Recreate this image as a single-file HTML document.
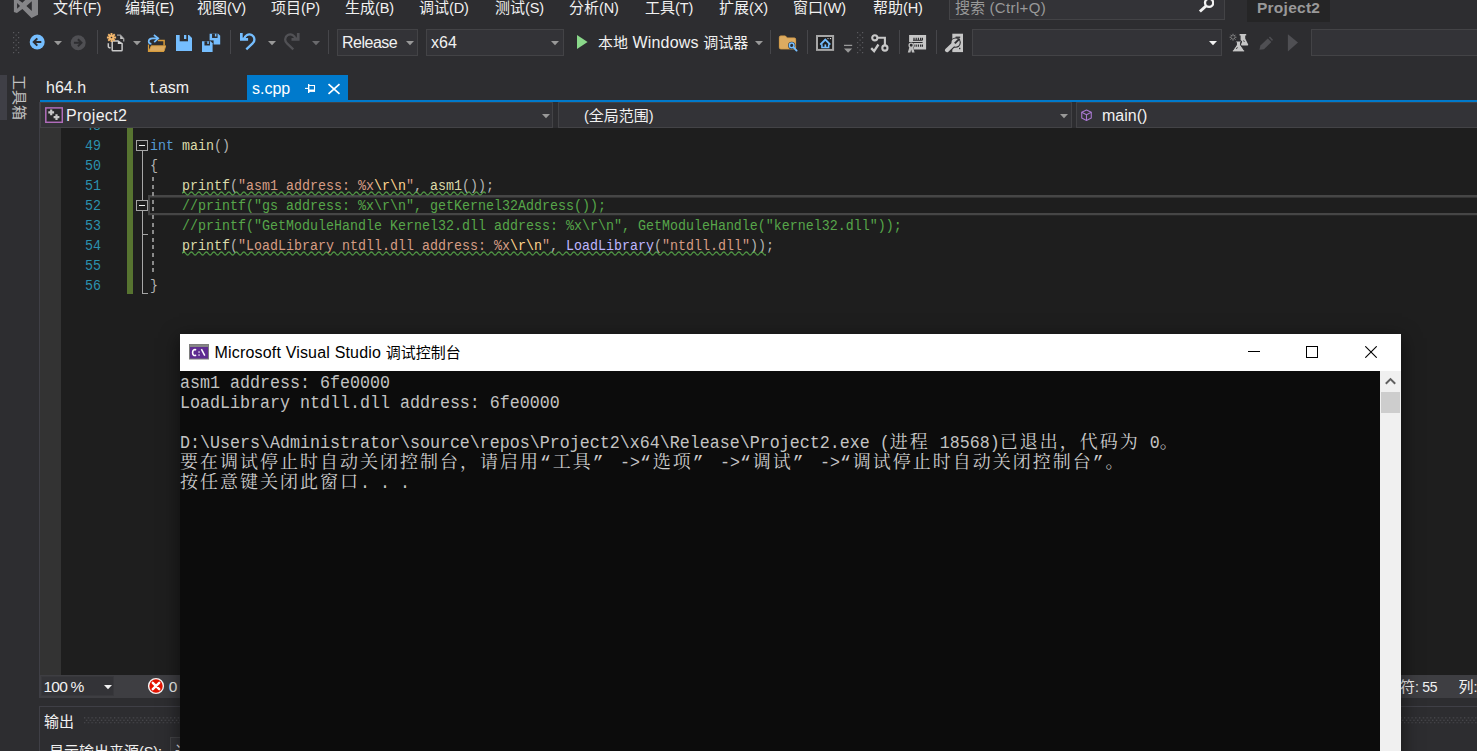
<!DOCTYPE html>
<html lang="zh-CN"><head><meta charset="utf-8"><title>Project2 - Microsoft Visual Studio</title>
<style>
html,body{margin:0;padding:0}
body{width:1477px;height:751px;overflow:hidden;position:relative;background:#2d2d30;font-family:"Liberation Sans","Noto Sans CJK SC",sans-serif;}
#root{position:absolute;left:0;top:0;width:1477px;height:751px;overflow:hidden;background:#2d2d30}
#root div{position:absolute;box-sizing:border-box}
.t{white-space:pre;line-height:20px;height:20px}
.ui{font-family:"Liberation Sans","Noto Sans CJK SC",sans-serif;font-size:15px}
.mn{font-size:14.5px;letter-spacing:-0.15px}
.mn3{font-size:15px;letter-spacing:0.35px}
.mn2{font-size:16px;letter-spacing:0.15px}
.code{font-family:"Liberation Mono",monospace;font-size:13.3333px;transform:scaleY(1.13);transform-origin:0 14.4px}
.con{font-family:"Liberation Mono",monospace;font-size:16.6667px}
.l{display:inline-block;transform:scaleY(1.15);transform-origin:0 15.5px;color:#c3c3c3}
.cj{display:inline-block;position:relative;vertical-align:top;overflow:hidden;line-height:1.2;top:1px;font-family:"Liberation Sans","Noto Sans CJK SC",sans-serif}
.cjr{font-family:"Liberation Mono","Noto Serif CJK SC",serif;letter-spacing:2px;color:#cccccc}
.ct{white-space:pre}
.ic{display:block}
</style></head>
<body>
<div id="root">
<div class="t ui" style="left:53px;top:-2.5px;color:#f1f1f1"><span class="cj" style="width:30px;height:18.75px;font-size:15px;"><span class="ct">文件</span></span><span class="mn">(F)</span></div>
<div class="t ui" style="left:125px;top:-2.5px;color:#f1f1f1"><span class="cj" style="width:30px;height:18.75px;font-size:15px;"><span class="ct">编辑</span></span><span class="mn">(E)</span></div>
<div class="t ui" style="left:197px;top:-2.5px;color:#f1f1f1"><span class="cj" style="width:30px;height:18.75px;font-size:15px;"><span class="ct">视图</span></span><span class="mn">(V)</span></div>
<div class="t ui" style="left:271px;top:-2.5px;color:#f1f1f1"><span class="cj" style="width:30px;height:18.75px;font-size:15px;"><span class="ct">项目</span></span><span class="mn">(P)</span></div>
<div class="t ui" style="left:345px;top:-2.5px;color:#f1f1f1"><span class="cj" style="width:30px;height:18.75px;font-size:15px;"><span class="ct">生成</span></span><span class="mn">(B)</span></div>
<div class="t ui" style="left:419px;top:-2.5px;color:#f1f1f1"><span class="cj" style="width:30px;height:18.75px;font-size:15px;"><span class="ct">调试</span></span><span class="mn">(D)</span></div>
<div class="t ui" style="left:495px;top:-2.5px;color:#f1f1f1"><span class="cj" style="width:30px;height:18.75px;font-size:15px;"><span class="ct">测试</span></span><span class="mn">(S)</span></div>
<div class="t ui" style="left:569px;top:-2.5px;color:#f1f1f1"><span class="cj" style="width:30px;height:18.75px;font-size:15px;"><span class="ct">分析</span></span><span class="mn">(N)</span></div>
<div class="t ui" style="left:645px;top:-2.5px;color:#f1f1f1"><span class="cj" style="width:30px;height:18.75px;font-size:15px;"><span class="ct">工具</span></span><span class="mn">(T)</span></div>
<div class="t ui" style="left:719px;top:-2.5px;color:#f1f1f1"><span class="cj" style="width:30px;height:18.75px;font-size:15px;"><span class="ct">扩展</span></span><span class="mn">(X)</span></div>
<div class="t ui" style="left:793px;top:-2.5px;color:#f1f1f1"><span class="cj" style="width:30px;height:18.75px;font-size:15px;"><span class="ct">窗口</span></span><span class="mn">(W)</span></div>
<div class="t ui" style="left:873px;top:-2.5px;color:#f1f1f1"><span class="cj" style="width:30px;height:18.75px;font-size:15px;"><span class="ct">帮助</span></span><span class="mn">(H)</span></div>
<div style="left:949px;top:-1px;width:276px;height:21px;background:#333337;border:1px solid #434346;"></div>
<div class="t ui" style="left:955px;top:-2.5px;color:#999"><span class="cj" style="width:30px;height:18.75px;font-size:15px;"><span class="ct">搜索</span></span><span class="mn3"> (Ctrl+Q)</span></div>
<div style="left:1198px;top:-2px;width:16px;height:16px"><svg class="ic" width="16" height="16" viewBox="0 0 16 16"><circle cx="11.1" cy="4.8" r="4.1" fill="none" stroke="#f1f1f1" stroke-width="2.3"/><path d="M8 8L1.9 13.5" stroke="#f1f1f1" stroke-width="3" stroke-linecap="butt"/></svg></div>
<div style="left:1247px;top:0px;width:83px;height:22px;background:#252526;"></div>
<div class="t ui" style="left:1257px;top:-2px;color:#999;font-weight:bold;font-size:15.5px;letter-spacing:0.25px">Project2</div>
<div style="left:13px;top:-8px;width:26px;height:26px"><svg class="ic" width="26" height="26" viewBox="13 -8 26 26"><path fill-rule="evenodd" fill="#858588" d="M31.5 18L38 14.7V-2.9L31.5-6.2L22.4 2.7L16.9-1.2L13.9-.2V12L16.9 13L22.4 9.1ZM17.1 3V8.8L20 5.9ZM31.8 1.3V10.9L26.4 5.9Z"/></svg></div>
<div style="left:13px;top:32px;width:7px;height:22px"><svg class="ic" width="7" height="22" viewBox="0 0 7 22"><g fill="#5a5a5e"><rect x="0" y="0" width="1.2" height="1.2"/><rect x="5" y="0" width="1.2" height="1.2"/><rect x="2.5" y="2.5" width="1.2" height="1.2"/><rect x="0" y="5" width="1.2" height="1.2"/><rect x="5" y="5" width="1.2" height="1.2"/><rect x="2.5" y="7.5" width="1.2" height="1.2"/><rect x="0" y="10" width="1.2" height="1.2"/><rect x="5" y="10" width="1.2" height="1.2"/><rect x="2.5" y="12.5" width="1.2" height="1.2"/><rect x="0" y="15" width="1.2" height="1.2"/><rect x="5" y="15" width="1.2" height="1.2"/><rect x="2.5" y="17.5" width="1.2" height="1.2"/><rect x="0" y="20" width="1.2" height="1.2"/><rect x="5" y="20" width="1.2" height="1.2"/></g></svg></div>
<div style="left:29px;top:34px;width:16px;height:16px"><svg class="ic" width="16" height="16" viewBox="0 0 16 16"><circle cx="8.2" cy="8" r="7.5" fill="#75beff"/><path d="M12.3 8H5.2M8.3 4.4L4.7 8L8.3 11.6" fill="none" stroke="#2d2d30" stroke-width="2"/></svg></div>
<div style="left:54px;top:41px;width:8px;height:5px"><svg class="ic" width="8" height="5" viewBox="0 0 8 5"><path d="M0 0H8L4 4.2Z" fill="#999999"/></svg></div>
<div style="left:70px;top:35px;width:16px;height:16px"><svg class="ic" width="16" height="16" viewBox="0 0 16 16"><circle cx="8.2" cy="7.8" r="7.5" fill="#4f4f53"/><path d="M3.9 7.8H11M7.9 4.2L11.5 7.8L7.9 11.4" fill="none" stroke="#2d2d30" stroke-width="2"/></svg></div>
<div style="left:97px;top:30px;width:1px;height:24px;background:#46464a"></div>
<div style="left:106px;top:33px;width:19px;height:19px"><svg class="ic" width="19" height="19" viewBox="0 0 19 19"><path d="M11 2.1H14.4L17.7 5.7V8.4" fill="none" stroke="#9c9c9c" stroke-width="1.4"/><path d="M14.2 2.2V5.9H17.6Z" fill="#c4c4c4"/><path d="M2.3 10.2V13.2Q2.3 14.8 4.6 14.8" fill="none" stroke="#c8c8c8" stroke-width="1.5"/><path d="M7 7.9H12L16.1 10.7V16.9Q16.1 17.7 15.3 17.7H7Q6.2 17.7 6.2 16.9V8.7Q6.2 7.9 7 7.9Z" fill="#28282b" stroke="#c8c8c8" stroke-width="1.5"/><path d="M11.8 7.6V10.9H16.3Z" fill="#d4d4d4"/><g stroke="#f3b76c" stroke-width="1.9" stroke-linecap="butt"><path d="M5.5 -0.1V9.1M0.9 4.5H10.1M2.25 1.25L8.75 7.75M8.75 1.25L2.25 7.75"/></g><circle cx="5.5" cy="4.5" r="0.8" fill="#2d2d30"/></svg></div>
<div style="left:133px;top:41px;width:8px;height:5px"><svg class="ic" width="8" height="5" viewBox="0 0 8 5"><path d="M0 0H8L4 4.2Z" fill="#999999"/></svg></div>
<div style="left:147px;top:34px;width:19px;height:19px"><svg class="ic" width="19" height="19" viewBox="0 0 19 19"><path d="M10.9 6.6H17.1V11.6" fill="none" stroke="#d69a3a" stroke-width="1.5"/><path d="M1.5 10.4V17.4H17" fill="none" stroke="#d69a3a" stroke-width="1.2"/><path d="M4.3 11.8H18.7L17.1 17.2H1.8Z" fill="#dcab61" stroke="#d69a3a" stroke-width="0.9" stroke-linejoin="round"/><path d="M11 4.4H5.6Q1.7 4.5 1.7 7.6Q1.9 9.7 4.4 9.9" fill="none" stroke="#75beff" stroke-width="1.7"/><path d="M6.9 1L11.2 4.3L7.2 8.2" fill="none" stroke="#75beff" stroke-width="1.7"/></svg></div>
<div style="left:176px;top:35px;width:16px;height:16px"><svg class="ic" width="16" height="16" viewBox="0 0 16 16"><path d="M0 0h13l3 3v13h-16z" fill="#75beff"/><rect x="3.7" y="0" width="8.3" height="6.3" fill="#2d2d30"/><rect x="8" y="0" width="2.3" height="4" fill="#75beff"/></svg></div>
<div style="left:202px;top:33px;width:19px;height:19px"><svg class="ic" width="19" height="19" viewBox="0 0 19 19"><path d="M7.6 0.8h8.6125l1.9875 1.9875v8.6125h-10.6z" fill="#75beff"/><rect x="10.0512" y="0.8" width="5.49875" height="4.17375" fill="#2d2d30"/><rect x="12.9" y="0.8" width="1.52375" height="2.65" fill="#75beff"/><path d="M-0.9 7.4H11.6V19H-0.9Z" fill="#2d2d30"/><path d="M0 8.3h8.6125l1.9875 1.9875v8.6125h-10.6z" fill="#75beff"/><rect x="2.45125" y="8.3" width="5.49875" height="4.17375" fill="#2d2d30"/><rect x="5.3" y="8.3" width="1.52375" height="2.65" fill="#75beff"/></svg></div>
<div style="left:230px;top:30px;width:1px;height:24px;background:#46464a"></div>
<div style="left:239px;top:32px;width:18px;height:19px"><svg class="ic" width="18" height="19" viewBox="0 0 18 19"><path d="M1 1H3.7V6.1H9.1V8.8H1Z" fill="#75beff"/><path d="M3.4 6.5L5.3 6.8" stroke="#75beff" stroke-width="2.3"/><path d="M5.25 6.8A5.1 5.1 0 1 1 13.6 11.4L7.3 17.4" fill="none" stroke="#75beff" stroke-width="2.3"/></svg></div>
<div style="left:268px;top:41px;width:8px;height:5px"><svg class="ic" width="8" height="5" viewBox="0 0 8 5"><path d="M0 0H8L4 4.2Z" fill="#999999"/></svg></div>
<div style="left:284px;top:32px;width:18px;height:19px"><svg class="ic" width="18" height="19" viewBox="0 0 18 19"><g transform="translate(16.6 0) scale(-1 1)"><path d="M1 1H3.7V6.1H9.1V8.8H1Z" fill="#515155"/><path d="M3.4 6.5L5.3 6.8" stroke="#515155" stroke-width="2.3"/><path d="M5.25 6.8A5.1 5.1 0 1 1 13.6 11.4L7.3 17.4" fill="none" stroke="#515155" stroke-width="2.3"/></g></svg></div>
<div style="left:312px;top:41px;width:8px;height:5px"><svg class="ic" width="8" height="5" viewBox="0 0 8 5"><path d="M0 0H8L4 4.2Z" fill="#6a6a6d"/></svg></div>
<div style="left:328px;top:30px;width:1px;height:24px;background:#46464a"></div>
<div style="left:337px;top:29px;width:81px;height:27px;background:#333337;border:1px solid #434346;"></div>
<div class="t ui" style="left:342px;top:32.5px;color:#f1f1f1;font-size:16px;letter-spacing:-0.5px">Release</div>
<div style="left:406px;top:41px;width:8px;height:5px"><svg class="ic" width="8" height="5" viewBox="0 0 8 5"><path d="M0 0H8L4 4.2Z" fill="#999999"/></svg></div>
<div style="left:426px;top:29px;width:138px;height:27px;background:#333337;border:1px solid #434346;"></div>
<div class="t ui" style="left:431px;top:32.5px;color:#f1f1f1;font-size:16px">x64</div>
<div style="left:551px;top:41px;width:8px;height:5px"><svg class="ic" width="8" height="5" viewBox="0 0 8 5"><path d="M0 0H8L4 4.2Z" fill="#999999"/></svg></div>
<div style="left:576px;top:34px;width:12px;height:16px"><svg class="ic" width="12" height="16" viewBox="0 0 12 16"><path d="M1 1L11.6 8L1 15Z" fill="#8ad88a"/></svg></div>
<div class="t ui" style="left:598px;top:32.5px;color:#f1f1f1"><span class="cj" style="width:30px;height:18.75px;font-size:15px;"><span class="ct">本地</span></span><span class="mn2"> Windows </span><span class="cj" style="width:45px;height:18.75px;font-size:15px;"><span class="ct">调试器</span></span></div>
<div style="left:755px;top:41px;width:8px;height:5px"><svg class="ic" width="8" height="5" viewBox="0 0 8 5"><path d="M0 0H8L4 4.2Z" fill="#999999"/></svg></div>
<div style="left:770px;top:30px;width:1px;height:24px;background:#46464a"></div>
<div style="left:778px;top:34px;width:20px;height:19px"><svg class="ic" width="20" height="19" viewBox="0 0 20 19"><path d="M1.4 3.4Q1.4 2 2.8 2H7.4L9.2 4H16.4Q17.6 4 17.6 5.3V13.6Q17.6 14.9 16.3 14.9H2.8Q1.4 14.9 1.4 13.6Z" fill="#dcab61" stroke="#d9a04c" stroke-width="1"/><circle cx="13.7" cy="11.4" r="3.6" fill="#2d2d30"/><circle cx="13.7" cy="11.4" r="2.3" fill="#2d2d30" stroke="#75beff" stroke-width="1.5"/><path d="M15.4 13.2L18.6 16.6" stroke="#75beff" stroke-width="1.9" stroke-linecap="round"/></svg></div>
<div style="left:807px;top:30px;width:1px;height:24px;background:#46464a"></div>
<div style="left:816px;top:34px;width:19px;height:18px"><svg class="ic" width="19" height="18" viewBox="0 0 19 18"><rect x="1" y="2" width="16.1" height="13.9" fill="#1f1f20" stroke="#a6a6a6" stroke-width="2"/><path d="M4.3 10.7L9.3 5.6L14.3 10.7" fill="none" stroke="#75beff" stroke-width="1.9"/><path d="M5.9 10.2V13.5H12.7V10.2" fill="none" stroke="#75beff" stroke-width="1.5"/><rect x="8.5" y="10.4" width="1.7" height="3.2" fill="#75beff"/><rect x="11.4" y="4" width="1.2" height="1.1" fill="#bbb"/><rect x="13.9" y="4" width="1.2" height="1.1" fill="#ddd"/></svg></div>
<div style="left:843px;top:44px;width:10px;height:10px"><svg class="ic" width="10" height="10" viewBox="0 0 10 10"><path d="M1 1.4H9.2" stroke="#999" stroke-width="1.3"/><path d="M1 4.4H9.2L5.1 8.8Z" fill="#999"/></svg></div>
<div style="left:857px;top:32px;width:7px;height:22px"><svg class="ic" width="7" height="22" viewBox="0 0 7 22"><g fill="#5a5a5e"><rect x="0" y="0" width="1.2" height="1.2"/><rect x="5" y="0" width="1.2" height="1.2"/><rect x="2.5" y="2.5" width="1.2" height="1.2"/><rect x="0" y="5" width="1.2" height="1.2"/><rect x="5" y="5" width="1.2" height="1.2"/><rect x="2.5" y="7.5" width="1.2" height="1.2"/><rect x="0" y="10" width="1.2" height="1.2"/><rect x="5" y="10" width="1.2" height="1.2"/><rect x="2.5" y="12.5" width="1.2" height="1.2"/><rect x="0" y="15" width="1.2" height="1.2"/><rect x="5" y="15" width="1.2" height="1.2"/><rect x="2.5" y="17.5" width="1.2" height="1.2"/><rect x="0" y="20" width="1.2" height="1.2"/><rect x="5" y="20" width="1.2" height="1.2"/></g></svg></div>
<div style="left:870px;top:33px;width:20px;height:20px"><svg class="ic" width="20" height="20" viewBox="0 0 20 20"><g fill="none" stroke="#c8c8c8" stroke-width="2.1"><circle cx="4.8" cy="4.8" r="2.6"/><circle cx="14.9" cy="15" r="2.6"/><path d="M7.4 4.8H14.9V12.4"/><path d="M1.2 15.1L4.1 18.1L8.4 11.5" stroke-width="2.3"/></g></svg></div>
<div style="left:899px;top:30px;width:1px;height:24px;background:#46464a"></div>
<div style="left:907px;top:34px;width:20px;height:19px"><svg class="ic" width="20" height="19" viewBox="0 0 20 19"><rect x="2.1" y="1" width="17" height="14.5" fill="#c6c6c6"/><path d="M6 6.3H15.6M2.1 8.5H15.6" stroke="#2d2d30" stroke-width="1"/><path d="M7 3.8V6M9.2 3.8V6M11.4 3.8V6M13.6 3.8V6M15.4 3.8V6M7 10.6V12.8M9.2 10.6V12.8M11.4 10.6V12.8M13.6 10.6V12.8M15.4 10.6V12.8" stroke="#2d2d30" stroke-width="1.2"/><path d="M1 8.6H6.6V16H1Z" fill="#2d2d30"/><path d="M2.6 12.6L0.8 18.4H3.4L4.2 15.6L5 18.4H7.6L5.8 12.6Z" fill="#bdbdbd"/><circle cx="4.2" cy="11.3" r="2.1" fill="#2d2d30" stroke="#c0c0c0" stroke-width="1.3"/></svg></div>
<div style="left:936px;top:30px;width:1px;height:24px;background:#46464a"></div>
<div style="left:944px;top:33px;width:20px;height:20px"><svg class="ic" width="20" height="20" viewBox="0 0 20 20"><path d="M8.3 0.7H19V19.1H8.3Z" fill="#c6c6c6"/><path d="M11.6 3.6H16.2V4.9H11.6Z" fill="#2d2d30"/><rect x="15" y="14.8" width="1.4" height="1.4" fill="#2d2d30"/><path d="M3 17.2L10.4 10.2" stroke="#2d2d30" stroke-width="6.4" stroke-linecap="round"/><circle cx="11.6" cy="9.6" r="5.2" fill="#2d2d30"/><path d="M3 17.2L10.4 10.2" stroke="#c6c6c6" stroke-width="4" stroke-linecap="round"/><circle cx="11.6" cy="9.6" r="4.1" fill="#c6c6c6"/><path d="M10.8 10.4L15.6 5.6" stroke="#2d2d30" stroke-width="2"/></svg></div>
<div style="left:972px;top:29px;width:250px;height:27px;background:#333337;border:1px solid #434346;"></div>
<div style="left:1208.8px;top:41px;width:8px;height:5px"><svg class="ic" width="8" height="5" viewBox="0 0 8 5"><path d="M0 0H8L4 4.2Z" fill="#f1f1f1"/></svg></div>
<div style="left:1229px;top:33px;width:20px;height:20px"><svg class="ic" width="20" height="20" viewBox="0 0 20 20"><g fill="#c6c6c6"><path d="M10.6 1H17.2V2.4H16.2V5.6L19.2 11.6Q19.4 12.6 18.4 12.6H11.6L13 8.6L11.6 7.6V2.4H10.6Z"/><path d="M6.6 8H12.4V9.4H11.6V12L15.4 17.6Q15.8 18.9 14.6 18.9H4.4Q3.2 18.9 3.6 17.6L7.4 12V9.4H6.6Z" stroke="#2d2d30" stroke-width="1"/></g><path d="M8.4 14.2L7.4 16" stroke="#2d2d30" stroke-width="0.9"/><path d="M14.6 7.4L15.4 9" stroke="#2d2d30" stroke-width="0.8"/><g stroke="#9a9a9a" stroke-width="0.9" fill="none"><path d="M4 0.8V7.6M0.6 4.2H7.4M1.6 1.8L6.4 6.6M6.4 1.8L1.6 6.6"/></g><circle cx="4" cy="4.2" r="1.3" fill="#2d2d30"/></svg></div>
<div style="left:1258px;top:36px;width:16px;height:14px"><svg class="ic" width="16" height="14" viewBox="0 0 16 14"><path d="M2.4 9.6L9.8 2.4L13.4 6L6 13.2L1.4 13.8Z" fill="#4f4f53"/><path d="M10.8 1.6L12 0.6L15 3.8L14 4.9Z" fill="#4f4f53"/></svg></div>
<div style="left:1287px;top:33.5px;width:12px;height:18px"><svg class="ic" width="12" height="18" viewBox="0 0 12 18"><path d="M0.9 0.2L11 8.6L0.9 17.4Z" fill="#4f4f53"/></svg></div>
<div style="left:1311px;top:29px;width:180px;height:27px;background:#333337;border:1px solid #434346;"></div>
<div style="left:0px;top:75px;width:7px;height:45px;background:#3f3f46;"></div>
<div class="t ui" style="left:29px;top:75px;transform-origin:0 0;transform:rotate(90deg);color:#d0d0d0"><span class="cj" style="width:45px;height:18.75px;font-size:15px;color:#c0c0c0;"><span class="ct">工具箱</span></span></div>
<div class="t ui" style="left:46px;top:78px;color:#f1f1f1;font-size:16px">h64.h</div>
<div class="t ui" style="left:150px;top:78px;color:#f1f1f1;font-size:16px">t.asm</div>
<div style="left:247px;top:75px;width:101px;height:26px;background:#007acc;"></div>
<div class="t ui" style="left:252px;top:78.5px;color:#fff;font-size:16px">s.cpp</div>
<div style="left:304px;top:82px;width:12px;height:12px"><svg class="ic" width="12" height="12" viewBox="0 0 12 12"><g fill="none" stroke="#fff"><path d="M1 6.4H4.6" stroke-width="1.1"/><path d="M4.7 2V11" stroke-width="1.4"/><path d="M4.6 3.5H10.5V9.6" stroke-width="1.1"/><path d="M4.6 8.7H11" stroke-width="2.4"/></g></svg></div>
<div style="left:327px;top:82px;width:14px;height:13px"><svg class="ic" width="14" height="13" viewBox="0 0 14 13"><path d="M1.5 2.2L12.5 11.8M12.5 2.2L1.5 11.8" stroke="#fff" stroke-width="1.7"/></svg></div>
<div style="left:40px;top:100px;width:1437px;height:2px;background:#007acc;"></div>
<div style="left:40px;top:102px;width:1437px;height:26px;background:#2d2d30;"></div>
<div style="left:40px;top:102px;width:513px;height:26px;background:#333337;border:1px solid #434346;"></div>
<div style="left:558px;top:102px;width:514px;height:26px;background:#333337;border:1px solid #434346;"></div>
<div style="left:1076px;top:102px;width:410px;height:26px;background:#333337;border:1px solid #434346;"></div>
<div style="left:45px;top:107px;width:18px;height:16px"><svg class="ic" width="18" height="16" viewBox="0 0 18 16"><rect x="0.8" y="0.9" width="16.5" height="14.4" fill="#2a2a2c" stroke="#b06cbb" stroke-width="1.5"/><path d="M6.2 2.4V8.2M3.3 5.3H9.1M11.5 7.3V13.1M8.6 10.2H14.4" stroke="#c8c8c8" stroke-width="2.2"/></svg></div>
<div class="t ui" style="left:66px;top:106px;color:#f1f1f1;font-size:16px;letter-spacing:0.3px">Project2</div>
<div style="left:542px;top:114px;width:8px;height:5px"><svg class="ic" width="8" height="5" viewBox="0 0 8 5"><path d="M0 0H8L4 4.2Z" fill="#999999"/></svg></div>
<div class="t ui" style="left:584px;top:106px;color:#f1f1f1"><span class="mn">(</span><span class="cj" style="width:60px;height:18.75px;font-size:15px;"><span class="ct">全局范围</span></span><span class="mn">)</span></div>
<div style="left:1060px;top:114px;width:8px;height:5px"><svg class="ic" width="8" height="5" viewBox="0 0 8 5"><path d="M0 0H8L4 4.2Z" fill="#999999"/></svg></div>
<div style="left:1080.6px;top:108.6px;width:11px;height:12.4px"><svg class="ic" width="11" height="12.4" viewBox="0 0 12 13"><g fill="none" stroke="#a877cf" stroke-width="1.2" stroke-linejoin="round"><path d="M6 0.8L11.2 3.4V9.6L6 12.2L0.8 9.6V3.4Z"/><path d="M0.8 3.4L6 6L11.2 3.4M6 6V12.2"/></g></svg></div>
<div class="t ui" style="left:1102px;top:106px;color:#f1f1f1;font-size:16px">main()</div>
<div style="left:40px;top:128px;width:1437px;height:547px;background:#1e1e1e;"></div>
<div style="left:40px;top:128px;width:21px;height:547px;background:#333333;"></div>
<div style="left:39px;top:102px;width:1px;height:596px;background:#3f3f46;"></div>
<div style="left:127px;top:128px;width:6px;height:166px;background:#577430;"></div>
<div style="left:148px;top:195px;width:1340px;height:20px;border:2px solid #464646;"></div>
<div style="left:150px;top:197px;width:1340px;height:1px;background:#343434;"></div>
<div style="left:148px;top:215px;width:1340px;height:1px;background:#272727;"></div>
<div style="left:141.8px;top:151px;width:1.4px;height:143px;background:#a8a8a8;"></div>
<div style="left:142px;top:293px;width:6px;height:1px;background:#a5a5a5;"></div>
<div style="left:142px;top:234px;width:6px;height:1px;background:#a5a5a5;"></div>
<div style="left:136px;top:140px;width:12px;height:11px;border:1px solid #a5a5a5;background:#1e1e1e;"><div style="left:2px;top:3.8px;width:6px;height:1.5px;background:#f0f0f0;"></div></div>
<div style="left:136px;top:200px;width:12px;height:11px;border:1px solid #a5a5a5;background:#1e1e1e;"><div style="left:2px;top:3.8px;width:6px;height:1.5px;background:#f0f0f0;"></div></div>
<div style="left:152.4px;top:177px;width:1.8px;height:98px;background:repeating-linear-gradient(180deg,#8a8a8a 0 4px,transparent 4px 7.6px);"></div>
<div style="left:80px;top:128px;width:30px;height:6px;overflow:hidden;"><div class="t code" style="left:5px;top:-11.5px;color:#2b91af">48</div></div>
<div class="t code" style="left:85px;top:136.5px;color:#2b91af">49</div>
<div class="t code" style="left:150px;top:136.5px;color:#dcdcdc"><span style="color:#569cd6">int</span> <span style="color:#dcdcaa">main</span><span style="color:#b4b4b4">()</span></div>
<div class="t code" style="left:85px;top:156.5px;color:#2b91af">50</div>
<div class="t code" style="left:150px;top:156.5px;color:#dcdcdc"><span style="color:#b4b4b4">{</span></div>
<div class="t code" style="left:85px;top:176.5px;color:#2b91af">51</div>
<div class="t code" style="left:150px;top:176.5px;color:#dcdcdc">    <span style="color:#dcdcaa">printf</span><span style="color:#b4b4b4">(</span><span style="color:#d69d85">&quot;asm1 address: %x</span><span style="color:#ffd68f">\r\n</span><span style="color:#d69d85">&quot;</span><span style="color:#b4b4b4">, </span><span style="color:#dcdcaa">asm1</span><span style="color:#b4b4b4">());</span></div>
<div class="t code" style="left:85px;top:196.5px;color:#2b91af">52</div>
<div class="t code" style="left:150px;top:196.5px;color:#dcdcdc">    <span style="color:#57a64a">//printf(&quot;gs address: %x\r\n&quot;, getKernel32Address());</span></div>
<div class="t code" style="left:85px;top:216.5px;color:#2b91af">53</div>
<div class="t code" style="left:150px;top:216.5px;color:#dcdcdc">    <span style="color:#57a64a">//printf(&quot;GetModuleHandle Kernel32.dll address: %x\r\n&quot;, GetModuleHandle(&quot;kernel32.dll&quot;));</span></div>
<div class="t code" style="left:85px;top:236.5px;color:#2b91af">54</div>
<div class="t code" style="left:150px;top:236.5px;color:#dcdcdc">    <span style="color:#dcdcaa">printf</span><span style="color:#b4b4b4">(</span><span style="color:#d69d85">&quot;LoadLibrary ntdll.dll address: %x</span><span style="color:#ffd68f">\r\n</span><span style="color:#d69d85">&quot;</span><span style="color:#b4b4b4">, </span><span style="color:#beb7ff">LoadLibrary</span><span style="color:#b4b4b4">(</span><span style="color:#d69d85">&quot;ntdll.dll&quot;</span><span style="color:#b4b4b4">));</span></div>
<div class="t code" style="left:85px;top:256.5px;color:#2b91af">55</div>
<div class="t code" style="left:85px;top:276.5px;color:#2b91af">56</div>
<div class="t code" style="left:150px;top:276.5px;color:#dcdcdc"><span style="color:#b4b4b4">}</span></div>
<div style="left:182px;top:190.6px;width:304px;height:5px"><svg class="ic" width="304" height="5" viewBox="0 0 304 5"><path d="M0 2.5q1.875 -3 3.75 0t3.75 0t3.75 0t3.75 0t3.75 0t3.75 0t3.75 0t3.75 0t3.75 0t3.75 0t3.75 0t3.75 0t3.75 0t3.75 0t3.75 0t3.75 0t3.75 0t3.75 0t3.75 0t3.75 0t3.75 0t3.75 0t3.75 0t3.75 0t3.75 0t3.75 0t3.75 0t3.75 0t3.75 0t3.75 0t3.75 0t3.75 0t3.75 0t3.75 0t3.75 0t3.75 0t3.75 0t3.75 0t3.75 0t3.75 0t3.75 0t3.75 0t3.75 0t3.75 0t3.75 0t3.75 0t3.75 0t3.75 0t3.75 0t3.75 0t3.75 0t3.75 0t3.75 0t3.75 0t3.75 0t3.75 0t3.75 0t3.75 0t3.75 0t3.75 0t3.75 0t3.75 0t3.75 0t3.75 0t3.75 0t3.75 0t3.75 0t3.75 0t3.75 0t3.75 0t3.75 0t3.75 0t3.75 0t3.75 0t3.75 0t3.75 0t3.75 0t3.75 0t3.75 0t3.75 0t3.75 0" fill="none" stroke="#57a64a" stroke-width="1.35" opacity=".88"/></svg></div>
<div style="left:182px;top:250.6px;width:584px;height:5px"><svg class="ic" width="584" height="5" viewBox="0 0 584 5"><path d="M0 2.5q1.875 -3 3.75 0t3.75 0t3.75 0t3.75 0t3.75 0t3.75 0t3.75 0t3.75 0t3.75 0t3.75 0t3.75 0t3.75 0t3.75 0t3.75 0t3.75 0t3.75 0t3.75 0t3.75 0t3.75 0t3.75 0t3.75 0t3.75 0t3.75 0t3.75 0t3.75 0t3.75 0t3.75 0t3.75 0t3.75 0t3.75 0t3.75 0t3.75 0t3.75 0t3.75 0t3.75 0t3.75 0t3.75 0t3.75 0t3.75 0t3.75 0t3.75 0t3.75 0t3.75 0t3.75 0t3.75 0t3.75 0t3.75 0t3.75 0t3.75 0t3.75 0t3.75 0t3.75 0t3.75 0t3.75 0t3.75 0t3.75 0t3.75 0t3.75 0t3.75 0t3.75 0t3.75 0t3.75 0t3.75 0t3.75 0t3.75 0t3.75 0t3.75 0t3.75 0t3.75 0t3.75 0t3.75 0t3.75 0t3.75 0t3.75 0t3.75 0t3.75 0t3.75 0t3.75 0t3.75 0t3.75 0t3.75 0t3.75 0t3.75 0t3.75 0t3.75 0t3.75 0t3.75 0t3.75 0t3.75 0t3.75 0t3.75 0t3.75 0t3.75 0t3.75 0t3.75 0t3.75 0t3.75 0t3.75 0t3.75 0t3.75 0t3.75 0t3.75 0t3.75 0t3.75 0t3.75 0t3.75 0t3.75 0t3.75 0t3.75 0t3.75 0t3.75 0t3.75 0t3.75 0t3.75 0t3.75 0t3.75 0t3.75 0t3.75 0t3.75 0t3.75 0t3.75 0t3.75 0t3.75 0t3.75 0t3.75 0t3.75 0t3.75 0t3.75 0t3.75 0t3.75 0t3.75 0t3.75 0t3.75 0t3.75 0t3.75 0t3.75 0t3.75 0t3.75 0t3.75 0t3.75 0t3.75 0t3.75 0t3.75 0t3.75 0t3.75 0t3.75 0t3.75 0t3.75 0t3.75 0t3.75 0t3.75 0t3.75 0t3.75 0t3.75 0t3.75 0t3.75 0" fill="none" stroke="#57a64a" stroke-width="1.35" opacity=".88"/></svg></div>
<div style="left:40px;top:675px;width:1437px;height:23px;background:#3e3e42;"></div>
<div style="left:41px;top:676px;width:73px;height:20px;background:#333337;border:1px solid #38383c;"></div>
<div class="t ui" style="left:43.5px;top:676.5px;color:#f1f1f1;font-size:15.5px;letter-spacing:-0.8px">100 %</div>
<div style="left:104px;top:685px;width:8px;height:5px"><svg class="ic" width="8" height="5" viewBox="0 0 8 5"><path d="M0 0H8L4 4.2Z" fill="#f1f1f1"/></svg></div>
<div style="left:147px;top:677px;width:18px;height:18px"><svg class="ic" width="18" height="18" viewBox="0 0 18 18"><circle cx="9" cy="9" r="7.4" fill="#e41300" stroke="#f4f4f4" stroke-width="1.4"/><path d="M5.8 5.8L12.2 12.2M12.2 5.8L5.8 12.2" stroke="#fff" stroke-width="2.4" stroke-linecap="round"/></svg></div>
<div class="t ui" style="left:168.8px;top:676.5px;color:#f1f1f1;font-size:15.5px">0</div>
<div class="t ui" style="left:1400px;top:677px;color:#f1f1f1"><span class="cj" style="width:15px;height:18.75px;font-size:15px;"><span class="ct">符</span></span><span class="mn" style="font-size:14px;letter-spacing:-0.3px">: 55</span></div>
<div class="t ui" style="left:1458.5px;top:677px;color:#f1f1f1"><span class="cj" style="width:15px;height:18.75px;font-size:15px;"><span class="ct">列</span></span><span class="mn">:</span></div>
<div style="left:39px;top:706px;width:1438px;height:60px;background:#2d2d30;border-top:1px solid #3f3f46;border-left:1px solid #3f3f46;"></div>
<div class="t ui" style="left:44px;top:711.5px;color:#f1f1f1"><span class="cj" style="width:30px;height:18.75px;font-size:15px;"><span class="ct">输出</span></span></div>
<div style="left:84px;top:717px;width:1400px;height:6.5px"><svg class="ic" width="1400" height="6.5"><defs><pattern id="dp84" width="3.75" height="5" patternUnits="userSpaceOnUse"><rect x="0" y="0.2" width="1.25" height="1.25" fill="#4a4a4f"/><rect x="1.875" y="2.7" width="1.25" height="1.25" fill="#4a4a4f"/></pattern></defs><rect width="1400" height="6.5" fill="url(#dp84)"/></svg></div>
<div class="t ui" style="left:49px;top:742px;color:#f1f1f1"><span class="cj" style="width:90px;height:18.75px;font-size:15px;"><span class="ct">显示输出来源</span></span><span class="mn">(S):</span></div>
<div style="left:170px;top:737px;width:100px;height:26px;background:#333337;border:1px solid #434346;"></div>
<div class="t ui" style="left:175px;top:742px;color:#f1f1f1"><span class="cj" style="width:30px;height:18.75px;font-size:15px;"><span class="ct">调试</span></span></div>
<div class="win" style="left:180px;top:334px;width:1221px;height:430px;box-shadow:0 5px 17px 1px rgba(0,0,0,.5);overflow:hidden;"><div style="left:0px;top:0px;width:1221px;height:37px;background:#fff;"></div><div style="left:9px;top:10px;width:20px;height:16px"><svg class="ic" width="20" height="16" viewBox="0 0 20 16"><rect x="0.5" y="0.5" width="19" height="14.5" fill="#5e2c91" stroke="#7d7d7d" stroke-width="1"/><rect x="1" y="1" width="18" height="2" fill="#858585"/><path d="M7.2 5.8Q3.6 4.9 3.6 8.6Q3.6 12.2 7.2 11.3" fill="none" stroke="#fff" stroke-width="1.6"/><rect x="9.4" y="7.4" width="1.3" height="1.3" fill="#fff"/><rect x="9.4" y="10.4" width="1.3" height="1.3" fill="#fff"/><path d="M12.4 5.2L15.8 11.6" stroke="#fff" stroke-width="1.5"/></svg></div><div class="t ui" style="left:34.5px;top:9px;color:#000;font-size:16px"><span style="letter-spacing:0.18px">Microsoft Visual Studio </span><span class="cj" style="width:75px;height:18.75px;font-size:15px;"><span class="ct">调试控制台</span></span></div><div style="left:1068px;top:17px;width:12px;height:1px;background:#000;"></div><div style="left:1126px;top:12px;width:12px;height:12px;border:1px solid #000;"></div><div style="left:1185px;top:12px;width:12px;height:12px"><svg class="ic" width="12" height="12" viewBox="0 0 12 12"><path d="M0.3 0.3L11.7 11.7M11.7 0.3L0.3 11.7" stroke="#000" stroke-width="1.1"/></svg></div><div style="left:0px;top:37px;width:1200px;height:400px;background:#0c0c0c;"></div><div style="left:1200px;top:37px;width:21px;height:400px;background:#f0f0f0;"></div><div style="left:1205px;top:43px;width:11px;height:8px"><svg class="ic" width="11" height="8" viewBox="0 0 11 8"><path d="M0.8 6.8L5.5 2.1L10.2 6.8" fill="none" stroke="#606060" stroke-width="2"/></svg></div><div style="left:1201px;top:58px;width:19px;height:21px;background:#cdcdcd;"></div><div class="t con" style="left:0px;top:39.5px;color:#cccccc"><span class="l">asm1 address: 6fe0000</span></div><div class="t con" style="left:0px;top:59.5px;color:#cccccc"><span class="l">LoadLibrary ntdll.dll address: 6fe0000</span></div><div class="t con" style="left:0px;top:99.5px;color:#cccccc"><span class="l">D:\Users\Administrator\source\repos\Project2\x64\Release\Project2.exe (</span><span class="cj cjr" style="width:40px;height:22.5px;font-size:18px;top:-0.9px;"><span class="ct">进程</span></span><span class="l"> 18568)</span><span class="cj cjr" style="width:140px;height:22.5px;font-size:18px;top:-0.9px;"><span class="ct">已退出，代码为</span></span><span class="l"> 0</span><span class="cj cjr" style="width:20px;height:22.5px;font-size:18px;top:-0.9px;"><span class="ct">。</span></span></div><div class="t con" style="left:0px;top:119.5px;color:#cccccc"><span class="cj cjr" style="width:440px;height:22.5px;font-size:18px;top:-0.9px;"><span class="ct">要在调试停止时自动关闭控制台，请启用“工具”</span></span><span class="l">-&gt;</span><span class="cj cjr" style="width:80px;height:22.5px;font-size:18px;top:-0.9px;"><span class="ct">“选项”</span></span><span class="l">-&gt;</span><span class="cj cjr" style="width:80px;height:22.5px;font-size:18px;top:-0.9px;"><span class="ct">“调试”</span></span><span class="l">-&gt;</span><span class="cj cjr" style="width:300px;height:22.5px;font-size:18px;top:-0.9px;"><span class="ct">“调试停止时自动关闭控制台”。</span></span></div><div class="t con" style="left:0px;top:139.5px;color:#cccccc"><span class="cj cjr" style="width:180px;height:22.5px;font-size:18px;top:-0.9px;"><span class="ct">按任意键关闭此窗口</span></span><span class="l">. . .</span></div></div>
</div>
</body></html>
